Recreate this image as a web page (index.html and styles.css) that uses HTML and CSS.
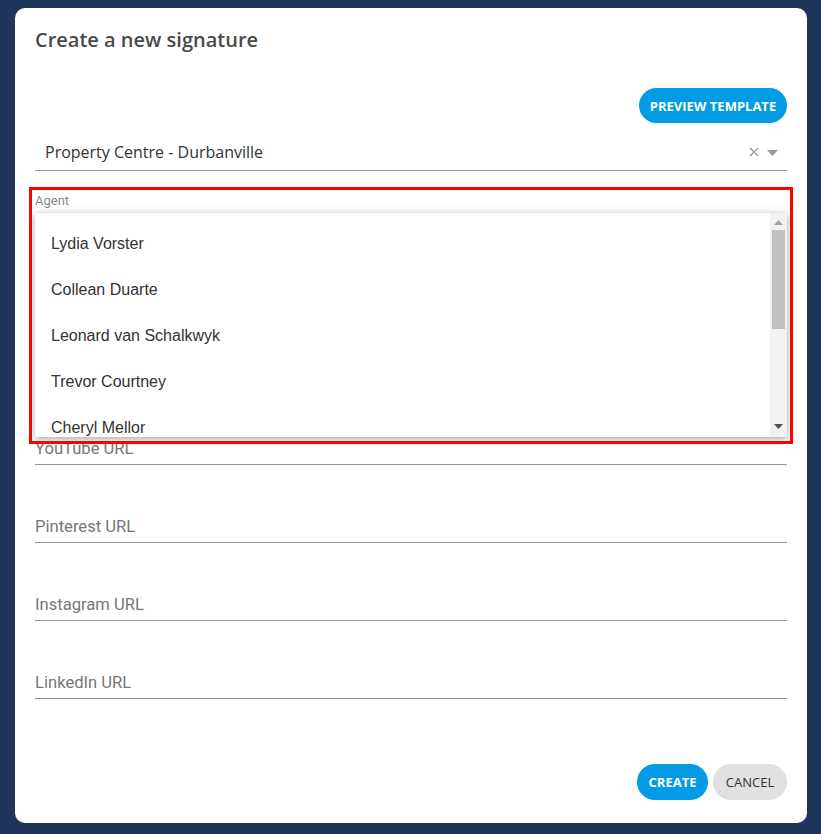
FILE: index.html
```html
<!DOCTYPE html>
<html>
<head>
<meta charset="utf-8">
<link rel="stylesheet" href="styles.css">
</head>
<body>
<div class="dialog">
  <h1 class="title">Create a new signature</h1>
  <div class="toolbar">
    <button class="btn btn-primary btn-preview">PREVIEW TEMPLATE</button>
  </div>
  <div class="select">
    <span class="select-value">Property Centre - Durbanville</span>
    <span class="select-icons">
      <svg class="icon-clear" width="10" height="10" viewBox="0 0 10 10"><path d="M1 1 L9 9 M9 1 L1 9" stroke="#999" stroke-width="1.3" fill="none"/></svg>
      <svg class="icon-caret" width="11" height="6" viewBox="0 0 11 6"><path d="M0 0 H11 L5.5 6 Z" fill="#999"/></svg>
    </span>
  </div>
  <div class="agent">
    <div class="agent-label">Agent</div>
    <div class="dropdown">
      <ul class="dropdown-list">
        <li>Lydia Vorster</li>
        <li>Collean Duarte</li>
        <li>Leonard van Schalkwyk</li>
        <li>Trevor Courtney</li>
        <li>Cheryl Mellor</li>
        <li>Annette Botha</li>
      </ul>
      <div class="scrollbar">
        <svg class="sb-arrow sb-up" width="9" height="5" viewBox="0 0 9 5"><path d="M0 5 H9 L4.5 0 Z" fill="#a3a3a3"/></svg>
        <div class="sb-thumb"></div>
        <svg class="sb-arrow sb-down" width="9" height="5" viewBox="0 0 9 5"><path d="M0 0 H9 L4.5 5 Z" fill="#505050"/></svg>
      </div>
    </div>
    <div class="highlight"></div>
  </div>
  <div class="field field-first"><span class="field-label">YouTube URL</span></div>
  <div class="field"><span class="field-label">Pinterest URL</span></div>
  <div class="field"><span class="field-label">Instagram URL</span></div>
  <div class="field"><span class="field-label">LinkedIn URL</span></div>
  <div class="actions">
    <button class="btn btn-primary btn-create">CREATE</button>
    <button class="btn btn-secondary">CANCEL</button>
  </div>
</div>
</body>
</html>
```
FILE: styles.css
```css
html, body {
  margin: 0;
  padding: 0;
}
body {
  background: #1f355c;
  padding: 8px 14px 11px 15px;
  box-sizing: border-box;
  height: 834px;
  overflow: hidden;
}
.dialog {
  background: #fff;
  border-radius: 10px;
  height: 815px;
  box-sizing: border-box;
  padding: 18px 20px 0 20px;
  display: flex;
  flex-direction: column;
}
.title {
  margin: 0;
  font-family: "Open Sans", sans-serif;
  font-weight: 600;
  font-size: 20px;
  line-height: 27px;
  color: #4a4a4a;
}
.toolbar {
  display: flex;
  justify-content: flex-end;
  margin-top: 35px;
}
.btn {
  border: none;
  border-radius: 18px;
  font-family: "Open Sans", sans-serif;
  font-size: 13px;
  cursor: pointer;
  padding: 0;
}
.btn-primary {
  background: #039be5;
  color: #fff;
  font-weight: 700;
}
.btn-preview {
  height: 35px;
  width: 148px;
}
.select {
  display: flex;
  align-items: center;
  justify-content: space-between;
  height: 48px;
  border-bottom: 1px solid #9e9e9e;
  padding: 11px 9px 0 10px;
  box-sizing: border-box;
}
.select-value {
  font-family: "Open Sans", sans-serif;
  font-size: 16px;
  color: #333;
}
.select-icons {
  display: flex;
  align-items: center;
  gap: 8px;
}
.icon-caret {
  margin-top: 2px;
}
.agent {
  position: relative;
  height: 216px;
}
.agent-label {
  padding-top: 22px;
  font-family: Roboto, sans-serif;
  font-size: 13px;
  line-height: 15px;
  color: #888;
}
.dropdown {
  position: absolute;
  z-index: 2;
  left: 0;
  right: 0;
  top: 42px;
  height: 224px;
  background: #fff;
  box-shadow: 0 2px 6px rgba(0,0,0,0.3), 0 0 12px rgba(0,0,0,0.08);
  display: flex;
  overflow: hidden;
}
.dropdown-list {
  list-style: none;
  margin: 0;
  padding: 8px 0 0 0;
  flex: 1;
}
.dropdown-list li {
  height: 46px;
  line-height: 46px;
  padding-left: 16px;
  font-family: "Liberation Sans", Arial, sans-serif;
  font-size: 16px;
  color: #333;
}
.scrollbar {
  width: 17px;
  background: #f1f1f1;
  position: relative;
}
.sb-arrow {
  position: absolute;
  left: 4px;
}
.sb-up { top: 7px; }
.sb-down { bottom: 8px; }
.sb-thumb {
  position: absolute;
  left: 2px;
  right: 2px;
  top: 17px;
  height: 99px;
  background: #c1c1c1;
}
.highlight {
  position: absolute;
  z-index: 3;
  left: -6px;
  top: 16px;
  width: 764px;
  height: 257px;
  box-sizing: border-box;
  border: 3px solid #ff0000;
  pointer-events: none;
}
.field {
  height: 78px;
  box-sizing: border-box;
  border-bottom: 1px solid #949494;
  display: flex;
  align-items: flex-end;
  padding-bottom: 5px;
}
.field-label {
  font-family: Roboto, sans-serif;
  font-size: 16.6px;
  line-height: 20px;
  color: #777;
}
.actions {
  display: flex;
  justify-content: flex-end;
  gap: 5px;
  margin-top: 65px;
}
.btn-create {
  height: 36px;
  width: 71px;
}
.btn-secondary {
  background: #e0e0e0;
  color: #333;
  height: 36px;
  width: 74px;
  font-weight: 400;
}
```
